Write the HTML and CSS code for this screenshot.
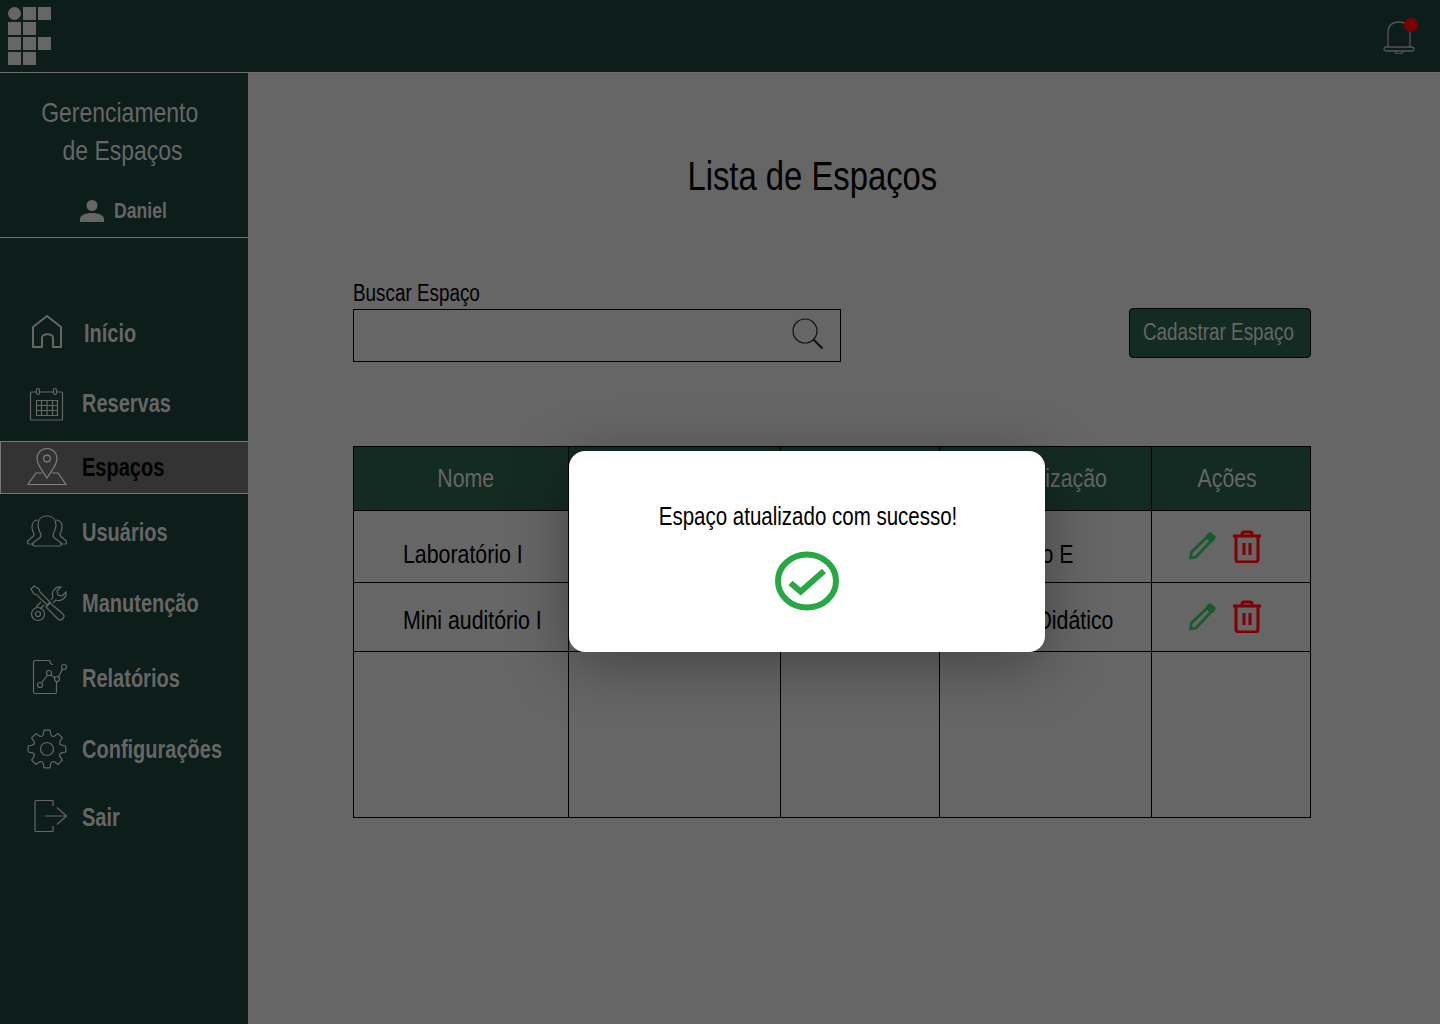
FILE: index.html
```html
<!DOCTYPE html>
<html lang="pt-BR">
<head>
    <meta charset="UTF-8">
    <meta name="viewport" content="width=device-width, initial-scale=1.0">
    <title>Lista de Espaços</title>
    <link rel="stylesheet" href="styles.css">
</head>
<body>
    <header class="topbar">
        <svg class="logo" width="44" height="59" viewBox="0 0 44 59" fill="#666">
            <circle cx="6.5" cy="6.5" r="6.5"/>
            <rect x="15" y="0" width="13" height="13"/>
            <rect x="30" y="0" width="13" height="13"/>
            <rect x="0" y="15" width="13" height="13"/>
            <rect x="15" y="15" width="13" height="13"/>
            <rect x="0" y="30" width="13" height="13"/>
            <rect x="15" y="30" width="13" height="13"/>
            <rect x="30" y="30" width="13" height="13"/>
            <rect x="0" y="45" width="13" height="13"/>
            <rect x="15" y="45" width="13" height="13"/>
        </svg>
        <div class="bell">
            <svg width="34" height="34" viewBox="0 0 34 34" fill="none" stroke="#555" stroke-width="1.3">
                <path d="M6 27V13C6 6 10 2 17 2s11 4 11 11v14"/>
                <rect x="2" y="27" width="30" height="4" rx="2"/>
                <path d="M13 31c0 2 2 3 4 3s4-1 4-3"/>
            </svg>
            <span class="bell-dot"></span>
        </div>
    </header>

    <div class="layout">
        <aside class="sidebar">
            <div class="sidebar-head">
                <h2>
                    <span class="narrow">Gerenciamento</span><br>
                    <span class="narrow indent">de Espaços</span>
                </h2>
                <div class="user">
                    <svg width="24" height="24" viewBox="0 0 24 24" fill="#666">
                        <circle cx="12" cy="6.5" r="5.5"/>
                        <path d="M0 23v-3c0-4 6-6 12-6s12 2 12 6v3z"/>
                    </svg>
                    <span class="narrow left">Daniel</span>
                </div>
            </div>

            <nav class="menu">
                <a class="menu-item">
                    <svg viewBox="0 0 40 40" class="home">
                        <path d="M8 33V13L22 2l14 11v20h-8V24c0-5-11-5-11 0v9z"/>
                    </svg>
                    <span class="narrow left start">Início</span>
                </a>
                <a class="menu-item">
                    <svg viewBox="0 0 40 40">
                        <rect x="5.500" y="8" width="32" height="28" rx="1"/>
                        <rect x="11.500" y="4.500" width="3" height="6" rx="1.500" fill="#0d1d1a"/>
                        <rect x="28.500" y="4.500" width="3" height="6" rx="1.500" fill="#0d1d1a"/>
                        <path d="M11.500 16.500h21v15h-21zM11.500 21.500h21M11.500 26.500h21M16.500 16.500v15M22 16.500v15M27.500 16.500v15"/>
                    </svg>
                    <span class="narrow left">Reservas</span>
                </a>
                <a class="menu-item active">
                    <svg viewBox="0 0 40 40" class="pin">
                        <path d="M17 25h-6L3 36.500h38L33 25h-6"/>
                        <path d="M22 30c-5-8-10-13-10-19.500a10 10 0 0 1 20 0C32 17 27 22 22 30z"/>
                        <circle cx="22" cy="10.500" r="3.300"/>
                    </svg>
                    <span class="narrow left">Espaços</span>
                </a>
                <a class="menu-item">
                    <svg viewBox="0 0 40 40">
                        <path d="M22 3c-6 0-9 4-9 9 0 4 2 7 3 10 0 2-1 3-3 4l-5 4c-1 1 0 3 1 3h26c1 0 2-2 1-3l-5-4c-2-1-3-2-3-4 1-3 3-6 3-10 0-5-3-9-9-9z"/>
                        <path d="M13 7c-4 0-6 3-6 7 0 3 1 5 2 7 0 2-1 3-3 4l-3 3c-1 1-1 3 1 3h5"/>
                        <path d="M31 7c4 0 6 3 6 7 0 3-1 5-2 7 0 2 1 3 3 4l3 3c1 1 1 3-1 3h-5"/>
                    </svg>
                    <span class="narrow left">Usuários</span>
                </a>
                <a class="menu-item">
                    <svg viewBox="0 0 40 40">
                        <path d="M6 5l3-3 5 3 1 3 10 10-3 3-10-10-3-1z"/>
                        <path d="M25 19l13 11c3 3-2 8-5 5L21 23z"/>
                        <path d="M26 16l2-3c-2-5 2-11 8-10l-4 4 1 4 4 1 4-4c1 6-5 10-10 8l-3 3"/>
                        <path d="M19 21l-4 4"/>
                        <path d="M16 18l-5 5"/>
                        <circle cx="13" cy="30" r="6.500"/>
                        <circle cx="13" cy="30" r="2.500"/>
                    </svg>
                    <span class="narrow left">Manutenção</span>
                </a>
                <a class="menu-item">
                    <svg viewBox="0 0 40 40">
                        <path d="M25 1.500H10Q8.500 1.500 8.500 3v30Q8.500 34.500 10 34.500h20q1.500 0 1.500-1.500V23"/>
                        <path d="M25 1.500c0 3 1 4 3 4"/>
                        <path d="M16.500 24l6-8M26 16l4 3M33.500 18l4-8"/>
                        <circle cx="15" cy="26" r="2.500"/>
                        <circle cx="24" cy="14" r="2.500"/>
                        <circle cx="32" cy="20" r="2.500"/>
                        <circle cx="39" cy="8" r="2.500"/>
                    </svg>
                    <span class="narrow left">Relatórios</span>
                </a>
                <a class="menu-item">
                    <svg viewBox="0 0 40 40">
                        <g transform="translate(22 19)" stroke-linejoin="round">
                            <path id="dente" d="M-5.200-12.500L-3.800-14.500L-3-18.800H3L3.800-14.500L5.200-12.500"/>
                            <use href="#dente" transform="rotate(45)"/>
                            <use href="#dente" transform="rotate(90)"/>
                            <use href="#dente" transform="rotate(135)"/>
                            <use href="#dente" transform="rotate(180)"/>
                            <use href="#dente" transform="rotate(225)"/>
                            <use href="#dente" transform="rotate(270)"/>
                            <use href="#dente" transform="rotate(315)"/>
                            <circle r="6.500"/>
                        </g>
                    </svg>
                    <span class="narrow left">Configurações</span>
                </a>
                <a class="menu-item">
                    <svg viewBox="0 0 40 40">
                        <path d="M28 8V2.500H11q-1 0-1 1v29q0 1 1 1h17V28"/>
                        <path d="M20 18h21.500M32 9.500l9.500 8.500-9.500 8.500"/>
                    </svg>
                    <span class="narrow left">Sair</span>
                </a>
            </nav>
        </aside>

        <main class="content">
            <h1><span class="narrow">Lista de Espaços</span></h1>

            <div class="toolbar">
                <div class="search">
                    <label for="busca"><span class="narrow left">Buscar Espaço</span></label>
                    <div class="search-box">
                        <input type="text" id="busca">
                        <svg width="32" height="32" viewBox="0 0 32 32" fill="none" stroke="#111">
                            <circle cx="13" cy="13" r="12" stroke-width="1.200"/>
                            <path d="M21.500 21.500l9 9" stroke-width="2.200"/>
                        </svg>
                    </div>
                </div>
                <button class="add-btn"><span class="narrow left">Cadastrar Espaço</span></button>
            </div>

            <table class="spaces">
                <thead>
                    <tr>
                        <th class="col-name"><span class="narrow">Nome</span></th>
                        <th class="col-b"></th>
                        <th class="col-c"></th>
                        <th class="col-d"><span class="narrow">Localização</span></th>
                        <th class="col-e"><span class="narrow">Ações</span></th>
                    </tr>
                </thead>
                <tbody>
                    <tr class="row-a">
                        <td class="name"><span class="narrow left">Laboratório I</span></td>
                        <td></td>
                        <td></td>
                        <td class="place"><span class="narrow">Bloco E</span></td>
                        <td class="actions">
                            <div class="icons">
                                <svg width="28" height="30" viewBox="0 0 28 30" fill="none" stroke="#175a2c" stroke-width="2.600"><path d="M2.500 27l1-6L19 6l4 4L8 26z"/><path d="M19 4l3-2 5 4-2 4z" fill="#175a2c" stroke-width="1.500"/></svg>
                                <svg width="30" height="33" viewBox="0 0 30 33" fill="none" stroke="#800000" stroke-width="3"><path d="M1 6h28M10 6V4q0-2 2-2h6q2 0 2 2v2M4 6v23q0 3 3 3h16q3 0 3-3V6"/><path d="M12 13v12M18 13v12"/></svg>
                            </div>
                        </td>
                    </tr>
                    <tr class="row-b">
                        <td class="name"><span class="narrow left">Mini auditório I</span></td>
                        <td></td>
                        <td></td>
                        <td class="place"><span class="narrow">Prédio Didático</span></td>
                        <td class="actions">
                            <div class="icons">
                                <svg width="28" height="30" viewBox="0 0 28 30" fill="none" stroke="#175a2c" stroke-width="2.600"><path d="M2.500 27l1-6L19 6l4 4L8 26z"/><path d="M19 4l3-2 5 4-2 4z" fill="#175a2c" stroke-width="1.500"/></svg>
                                <svg width="30" height="33" viewBox="0 0 30 33" fill="none" stroke="#800000" stroke-width="3"><path d="M1 6h28M10 6V4q0-2 2-2h6q2 0 2 2v2M4 6v23q0 3 3 3h16q3 0 3-3V6"/><path d="M12 13v12M18 13v12"/></svg>
                            </div>
                        </td>
                    </tr>
                    <tr class="row-c">
                        <td></td><td></td><td></td><td></td><td></td>
                    </tr>
                </tbody>
            </table>
        </main>
    </div>

    <div class="modal">
        <p><span class="narrow">Espaço atualizado com sucesso!</span></p>
        <svg width="66" height="60" viewBox="0 0 66 60" fill="none" stroke="#28a745" stroke-width="6">
            <ellipse cx="33" cy="30" rx="29" ry="26.500"/>
            <path d="M16.500 32l10.200 8.500L50 20"/>
        </svg>
    </div>
</body>
</html>
```

FILE: styles.css
```css
* {
    margin: 0;
    padding: 0;
    box-sizing: border-box;
}

body {
    font-family: "Liberation Sans", Arial, sans-serif;
    background: #666;
    color: #000;
    height: 1024px;
    overflow: hidden;
    position: relative;
}

/* no condensed family installed, so squeeze the text */
.narrow {
    display: inline-block;
    white-space: nowrap;
    transform: scaleX(0.82);
}

.narrow.left {
    transform-origin: left center;
}

.topbar {
    height: 73px;
    background: #0d1d1a;
    border-bottom: 1px solid #6f6f6f;
    display: flex;
    align-items: flex-start;
    justify-content: space-between;
    padding: 7px 24px 0 8px;
}

.bell {
    position: relative;
    margin-top: 13px;
}

.bell-dot {
    position: absolute;
    top: -2px;
    right: -2px;
    width: 14px;
    height: 14px;
    border-radius: 50%;
    background: #7a0006;
}

.layout {
    display: flex;
    height: 951px;
}

.sidebar {
    width: 248px;
    background: #0d1d1a;
    color: #666;
    flex-shrink: 0;
}

.sidebar-head {
    height: 165px;
    border-bottom: 1px solid #6f6f6f;
    padding-top: 21px;
    text-align: center;
}

.sidebar-head h2 {
    font-size: 28px;
    font-weight: 400;
    line-height: 38px;
    padding-right: 8px;
}

.indent {
    padding-left: 7px;
}

.user {
    display: flex;
    align-items: center;
    gap: 10px;
    margin-top: 28px;
    padding-left: 80px;
    font-size: 22px;
    font-weight: 700;
}

.user .narrow {
    transform: scaleX(0.8);
}

.menu {
    display: flex;
    flex-direction: column;
    padding-top: 69px;
}

.menu-item {
    height: 53px;
    display: flex;
    align-items: center;
    gap: 17px;
    padding-left: 24px;
    font-size: 25px;
    font-weight: 700;
    color: #666;
    border: 1px solid transparent;
    border-right: 0;
}

.menu-item .narrow {
    transform: scaleX(0.8);
}

.menu-item svg {
    width: 40px;
    height: 40px;
    flex: none;
    overflow: visible;
    fill: none;
    stroke: #666;
    stroke-width: 1.2;
}

.menu-item svg.home {
    stroke-width: 2;
    stroke-linejoin: round;
}

.menu-item .start {
    margin-left: 2px;
}

.menu-item.active {
    background: #333;
    border-color: #777;
    color: #000;
}

.menu-item svg.pin {
    stroke: #808080;
}

.menu-item:nth-child(2) { margin-top: 17px; }
.menu-item:nth-child(3) { margin-top: 11px; }
.menu-item:nth-child(4) { margin-top: 12px; }
.menu-item:nth-child(5) { margin-top: 18px; }
.menu-item:nth-child(6) { margin-top: 22px; }
.menu-item:nth-child(7) { margin-top: 18px; }
.menu-item:nth-child(8) { margin-top: 15px; }

.content {
    flex: 1;
    padding: 0 129px 0 105px;
}

h1 {
    font-size: 40px;
    font-weight: 400;
    text-align: center;
    margin-top: 80px;
    padding-right: 40px;
    line-height: 46px;
}

.toolbar {
    display: flex;
    justify-content: space-between;
    align-items: flex-end;
    margin-top: 80px;
}

.search label {
    display: block;
    font-size: 23px;
    line-height: 28px;
    padding-bottom: 2px;
}

.search-box {
    width: 488px;
    height: 53px;
    border: 1px solid #000;
    display: flex;
    align-items: center;
    padding: 0 16px 3px 0;
}

.search-box input {
    flex: 1;
    height: 100%;
    background: none;
    border: 0;
    outline: none;
}

.add-btn {
    width: 182px;
    height: 50px;
    margin-bottom: 4px;
    padding: 0 0 2px 13px;
    text-align: left;
    background: #142b24;
    color: #666;
    border: 1px solid #000;
    border-radius: 4px;
    font-family: inherit;
    font-size: 23px;
}

.spaces {
    border-collapse: collapse;
    table-layout: fixed;
    width: 957px;
    margin-top: 84px;
}

.spaces th,
.spaces td {
    border: 1px solid #000;
}

.spaces th {
    background: #142b24;
    color: #666;
    height: 64px;
    font-size: 26px;
    font-weight: 400;
}

.col-name { width: 215px; padding-left: 10px; }
.col-b { width: 212px; }
.col-c { width: 159px; }
.col-d { width: 212px; padding-left: 10px; }
.col-e { width: 159px; padding-right: 8px; }

.row-a td { height: 72px; }
.row-b td { height: 69px; }
.row-c td { height: 166px; }

.name,
.place {
    font-size: 26px;
    vertical-align: bottom;
}

.name {
    padding-left: 49px;
}

.place {
    text-align: center;
}

.row-a .name,
.row-a .place {
    padding-bottom: 12px;
}

.row-a .place {
    padding-right: 18px;
}

.row-b .name,
.row-b .place {
    padding-bottom: 15px;
}

.row-b .place {
    padding-right: 8px;
}

.icons {
    display: flex;
    justify-content: center;
    align-items: center;
    gap: 16px;
    padding-right: 12px;
    margin-top: -1px;
}

.modal {
    position: absolute;
    left: 569px;
    top: 451px;
    width: 476px;
    height: 201px;
    background: #fff;
    border-radius: 16px;
    box-shadow: 0 12px 60px rgba(0, 0, 0, 0.35);
    display: flex;
    flex-direction: column;
    align-items: center;
    padding-top: 48px;
    gap: 18px;
}

.modal p {
    font-size: 25px;
    line-height: 34px;
    padding-left: 2px;
}
```
